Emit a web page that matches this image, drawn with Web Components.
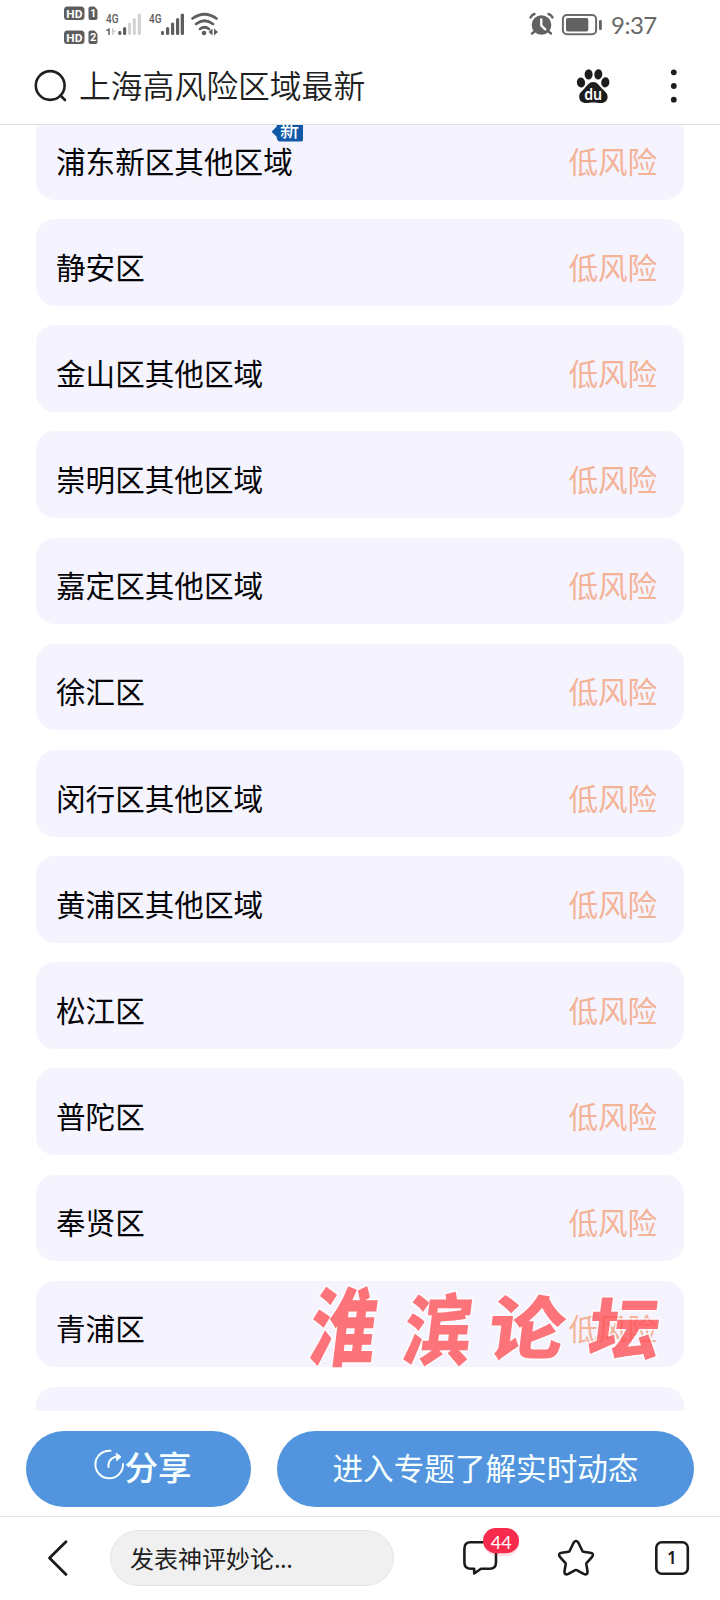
<!DOCTYPE html>
<html lang="zh-CN">
<head>
<meta charset="utf-8">
<title>上海高风险区域最新</title>
<style>
body{margin:0;background:#fff;font-family:"Noto Sans CJK SC",sans-serif}
</style>
</head>
<body>
<risk-app></risk-app>
<script>
const define=(name,html,setup)=>{
  const t=document.createElement('template');
  t.innerHTML=html;
  customElements.define(name,class extends HTMLElement{
    constructor(){
      super();
      this.attachShadow({mode:'open'}).append(t.content.cloneNode(true));
    }
    connectedCallback(){ if(setup) setup(this,this.shadowRoot); }
  });
};

define('status-bar',`
<style>
:host{display:flex;justify-content:space-between;height:50px;padding:0 50px;color:#5e5e5e}
svg{display:block;flex:none}
text{font-family:Roboto,sans-serif}
.right{display:flex;width:150px}
.time{font:24px/50px Lato,sans-serif;color:#686868;margin-left:-9px;letter-spacing:-.5px}
</style>
<svg width="180" height="50" viewBox="50 0 180 50" fill="#5e5e5e">
  <rect x="64" y="6.500" width="20.500" height="13.500" rx="3.500"/>
  <path d="M90.500 6.500h4l3 3.500v8q0 2-2 2h-5q-2 0-2-2v-9.500q0-2 2-2z"/>
  <rect x="64" y="30.500" width="20.500" height="13.500" rx="3.500"/>
  <path d="M90.500 30.500h4l3 3.500v8q0 2-2 2h-5q-2 0-2-2v-9.500q0-2 2-2z"/>
  <g fill="#fff" font-size="11.500" font-weight="700">
    <text x="66.300" y="17.500" textLength="16" lengthAdjust="spacingAndGlyphs">HD</text><text x="90" y="17.300" font-size="11">1</text>
    <text x="66.300" y="41.500" textLength="16" lengthAdjust="spacingAndGlyphs">HD</text><text x="90" y="41.300" font-size="11">2</text>
  </g>
  <g font-size="13.500" font-weight="500">
    <text x="106" y="22.700" textLength="12.500" lengthAdjust="spacingAndGlyphs">4G</text>
    <text x="149" y="22.700" textLength="12.500" lengthAdjust="spacingAndGlyphs">4G</text>
  </g>
  <path d="M109.700 28v7h-1.500v-4.300h-2v-.8z"/><path fill="#c9c9c9" d="M112 28v7h1.300v-2.200l2.700-1.300-2.700-1.500v-2z"/>
  <g>
    <rect x="118.300" y="31" width="3" height="4" rx="1.300"/><rect x="123" y="27" width="3.200" height="8" rx="1.500"/>
    <g fill="#d2d2d2"><rect x="128" y="22.500" width="3" height="12.500" rx="1.500"/><rect x="132.800" y="18" width="3" height="17" rx="1.500"/><rect x="137.700" y="13.500" width="3.300" height="21.500" rx="1.500"/></g>
    <rect x="161" y="31" width="3" height="4" rx="1.300"/><rect x="166" y="27" width="3.200" height="8" rx="1.500"/><rect x="171" y="22.500" width="3.200" height="12.500" rx="1.500"/><rect x="176" y="18" width="3.200" height="17" rx="1.500"/><rect x="180.700" y="13.500" width="3.300" height="21.500" rx="1.500"/>
  </g>
  <g fill="none" stroke="#5e5e5e" stroke-width="2.700" stroke-linecap="round"><path d="M192.500 18.500q12-8.500 24 0"/><path d="M196 24q8.500-6.500 17 0"/><path d="M200 29q4.500-3.500 9 0"/></g>
  <circle cx="204" cy="33" r="2.300"/>
  <path d="M212.500 28.500v7l-4-3.500zM214 28.500v7l4-3.500z"/>
</svg>
<div class="right">
<svg width="100" height="50" viewBox="520 0 100 50" fill="#626262">
  <circle cx="541.500" cy="25" r="9.800"/>
  <path d="M530.500 17.500q1.500-3 4-3.500M548.500 14q3 1 4 3.500M534.500 31.500l-2.500 2M548.500 31.500l2.500 2" fill="none" stroke="#626262" stroke-width="2.400" stroke-linecap="round"/>
  <path d="M541.300 19.500v6l4 3.800" fill="none" stroke="#fff" stroke-width="2.300" stroke-linecap="round"/>
  <rect x="562.900" y="15" width="33.200" height="19.300" rx="4" fill="none" stroke="#6b6b6b" stroke-width="2"/>
  <rect x="566" y="18" width="22.300" height="13.500" rx="1.800"/><rect x="599" y="20" width="2.800" height="10" rx="1.200"/>
</svg><span class="time">9:37</span></div>`);

define('search-bar',`
<style>
:host{display:flex;box-sizing:border-box;height:75px;border-bottom:1.500px solid #dedee0;align-items:center;padding:0 40px 0 33px;color:#1f1f1f}
span{flex:1;font-size:31.800px;line-height:46px;font-weight:350;margin-left:10px;position:relative;top:-3px}
svg{display:block;flex:none}
text{font:700 19px "Noto Sans",sans-serif}
</style>
<svg width="36" height="74" viewBox="33 50 36 74" fill="none" stroke="#1f1f1f" stroke-width="2.600" stroke-linecap="round"><circle cx="50.200" cy="85.500" r="14.400"/><path d="M60.500 95.500l4.500 4.500"/></svg>
<span><slot></slot></span>
<svg width="110" height="74" viewBox="570 50 110 74" fill="#1d1d1d">
  <ellipse cx="581" cy="82.500" rx="4.100" ry="5.100" transform="rotate(-10 581 82.500)"/>
  <ellipse cx="588.600" cy="74.400" rx="4" ry="5.200"/><ellipse cx="598.300" cy="74.400" rx="4" ry="5.200" transform="rotate(6 598.300 74.400)"/>
  <ellipse cx="605.300" cy="82.400" rx="4.100" ry="5.100" transform="rotate(8 605.300 82.400)"/>
  <path d="M593.300 82c4 0 6 3.500 8.500 6.500 3 3 5.800 4.500 5.800 8.300 0 4-3 6.300-6.800 6.300-3 0-4.500-.7-7.500-.7s-4.500.7-7.500.7c-4 0-6.600-2.500-6.600-6.300s2.600-5.400 5.300-8.300c2.500-3 4.600-6.500 8.800-6.500z"/>
  <text x="584.200" y="99.500" fill="#fff" style="font-size:16.500px;font-weight:600" textLength="18" lengthAdjust="spacingAndGlyphs">du</text>
  <circle cx="673.800" cy="72.300" r="2.900"/><circle cx="673.800" cy="86" r="2.900"/><circle cx="673.800" cy="99.700" r="2.900"/>
</svg>`);

define('new-badge',`
<style>
:host{display:block;width:33px;height:24px}
svg{display:block}
text{font:500 19px "Noto Sans CJK SC",sans-serif}
</style>
<svg width="33" height="24"><path d="M7 0h24q1 0 1 1.500v18.500q0 1.500-2 1.500h-21q-3 0-3.500-5l-4-3.800q-1-1 0-2l4-4z" fill="#1059a8"/><text x="9" y="17" fill="#fff">新</text></svg>`);

define('area-row',`
<style>
:host{display:flex;box-sizing:border-box;flex:none;height:86.700px;border-radius:19px;background:#f4f3fe;padding:8.500px 26.500px 0 19.700px;align-items:center;justify-content:space-between;font-size:29.600px;line-height:44px;position:relative}
.name{color:#050508}.level{color:#f4b297}
</style>
<span class="name"></span><span class="level"></span><slot></slot>`,
(el,r)=>{
  const name=el.getAttribute('name');
  if(!name) return;
  r.querySelector('.name').textContent=name;
  r.querySelector('.level').textContent='低风险';
});

define('forum-mark',`
<style>
:host{display:block;opacity:.78;pointer-events:none}
svg{display:block;overflow:visible}
text{font:900 66px "Noto Sans CJK SC",sans-serif;fill:#ff5055;stroke:#fff;stroke-width:3px;paint-order:stroke;stroke-linejoin:round}
</style>
<svg width="364" height="100" viewBox="300 1276 364 100">
  <text transform="translate(307 1359) skewX(-7) scale(1 1.300)">淮</text>
  <text transform="translate(401 1359) skewX(-7) scale(1.030 1.180)">滨</text>
  <text transform="translate(486 1354) skewX(-7) scale(1.150 1.050)">论</text>
  <text transform="translate(586 1354) skewX(-7) scale(1.080 1.020)">坛</text>
</svg>`);

define('area-list',`
<style>
:host{display:flex;flex-direction:column;gap:19.480px;flex:1;min-height:0;overflow:hidden;box-sizing:border-box;padding:0 36.300px;position:relative}
area-row:first-of-type{margin-top:-12px}
new-badge{position:absolute;left:235px;top:7px}
forum-mark{position:absolute;left:300px;top:1151px}
</style>
<area-row name="浦东新区其他区域"><new-badge></new-badge></area-row>
<area-row name="静安区"></area-row>
<area-row name="金山区其他区域"></area-row>
<area-row name="崇明区其他区域"></area-row>
<area-row name="嘉定区其他区域"></area-row>
<area-row name="徐汇区"></area-row>
<area-row name="闵行区其他区域"></area-row>
<area-row name="黄浦区其他区域"></area-row>
<area-row name="松江区"></area-row>
<area-row name="普陀区"></area-row>
<area-row name="奉贤区"></area-row>
<area-row name="青浦区"></area-row>
<area-row></area-row>
<forum-mark></forum-mark>`);

define('pill-button',`
<style>
:host{display:flex;align-items:center;justify-content:center;height:76px;border-radius:38px;background:#5295de;color:#f8ffff;box-sizing:border-box;padding-bottom:5px;line-height:46px}
</style><slot></slot>`);

define('action-bar',`
<style>
:host{display:flex;box-sizing:border-box;flex:none;height:105px;padding:20px 26px 0;gap:26px}
.share{width:225px;font-size:33.500px;font-weight:500;padding-left:8px}
.topic{flex:1;font-size:30.600px}
svg{display:block;flex:none;margin-top:-3px}
.share span{margin-top:-2px}
</style>
<pill-button class="share"><svg width="31" height="32" viewBox="93 1450 31 32" fill="none" stroke="#f8ffff" stroke-width="2" stroke-linecap="round"><path d="M109.500 1451.800A13.800 13.800 0 1 0 122 1465"/><path d="M107.500 1468v-2.500q1-7.500 10-8"/><path d="M115.500 1454.500l4.500 3.200-4 3.800z" fill="#f8ffff" stroke-width="1"/></svg><span>分享</span></pill-button>
<pill-button class="topic">进入专题了解实时动态</pill-button>`);

define('tool-bar',`
<style>
:host{display:flex;box-sizing:border-box;flex:none;height:84px;border-top:1px solid #dfe6ea;align-items:center;padding-right:26px}
svg{display:block;flex:none}
.input{box-sizing:border-box;width:284px;height:56px;border:1px solid #e6e6e7;border-radius:28px;background:#f0f0f1;padding-left:19px;font-size:24px;line-height:53px;color:#202020;margin-top:-1px}
.dots{letter-spacing:-.6px}
.icons{flex:1;display:flex;justify-content:flex-end}
text{font-family:Lato,sans-serif}
</style>
<svg width="110" height="83" viewBox="0 1517 110 83" fill="none" stroke="#1b1b1b" stroke-width="2.800" stroke-linecap="round" stroke-linejoin="round"><path d="M66 1541.800L49.500 1558l16.500 16.500"/></svg>
<div class="input">发表神评妙论<span class="dots">...</span></div>
<div class="icons"><svg width="254" height="83" viewBox="440 1517 254 83" fill="none" stroke="#1b1b1b" stroke-width="2.600" stroke-linejoin="round">
  <path d="M470.500 1542.300h19q6.500 0 6.500 6.500v13.500q0 6.500-6.500 6.500h-8.500l-6.800 4.700v-4.700h-3.200q-6.600 0-6.600-6.500v-13.500q0-6.500 6.100-6.500z"/>
  <rect x="484" y="1530" width="35" height="26" rx="13" fill="#f72b51" opacity=".16" stroke="none"/>
  <rect x="483" y="1528" width="36" height="25.300" rx="12.600" fill="#f72b4e" stroke="none"/>
  <text x="501.300" y="1548.600" text-anchor="middle" fill="#fff" stroke="none" font-size="18">44</text>
  <path d="M573.600 1542.800q2.400-3.600 4.800 0l4 8.200q.3.700 1 .8l6.800 1q4.500.8 1.700 4.300l-5.200 5.800q-.5.600-.4 1.300l1.200 6.800q.4 4.600-3.900 2.900l-6.800-3.700q-.8-.4-1.600 0l-6.800 3.700q-4.300 1.700-3.900-2.900l1.200-6.800q.1-.7-.4-1.300l-5.200-5.800q-2.800-3.500 1.700-4.300l6.800-1q.7-.1 1-.8z"/>
  <rect x="656.300" y="1542.300" width="31.500" height="31.500" rx="5.500"/>
  <text x="671.800" y="1564.300" text-anchor="middle" fill="#1b1b1b" stroke="none" font-size="17" font-weight="600" style="font-family:'Noto Sans',sans-serif">1</text>
</svg></div>`);

define('risk-app',`
<style>:host{display:flex;flex-direction:column;width:720px;height:1600px;overflow:hidden;background:#fff}</style>
<status-bar></status-bar>
<search-bar>上海高风险区域最新</search-bar>
<area-list></area-list>
<action-bar></action-bar>
<tool-bar></tool-bar>`);
</script>
</body>
</html>
